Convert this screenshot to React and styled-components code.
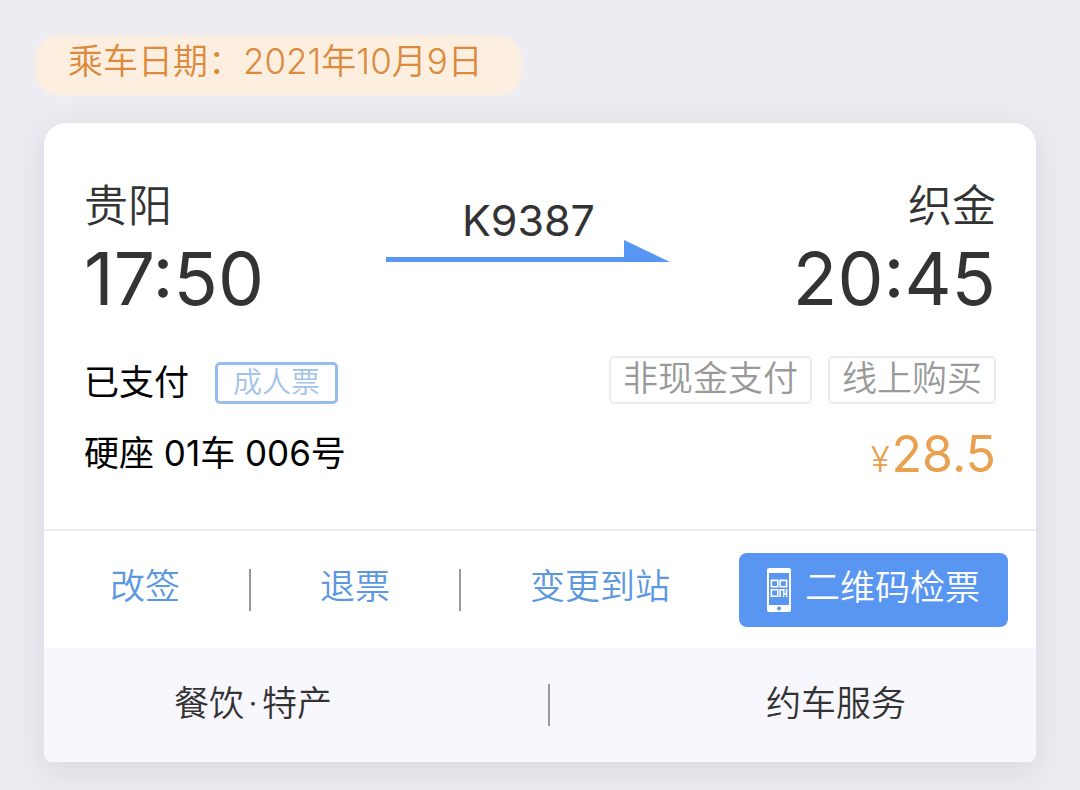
import React from "react";
import styled, { createGlobalStyle } from "styled-components";

const ticket = {
  date: "2021年10月9日",
  train: "K9387",
  from: { city: "贵阳", time: "17:50" },
  to: { city: "织金", time: "20:45" },
  status: "已支付",
  type: "成人票",
  tags: ["非现金支付", "线上购买"],
  seat: "硬座 01车 006号",
  price: "28.5",
};

function PhoneIcon() {
  return (
    <svg width="24" height="44" viewBox="0 0 24 44" aria-hidden="true">
      <path
        fill="#fff"
        fillRule="evenodd"
        d="M2 0h20a2 2 0 0 1 2 2v40a2 2 0 0 1-2 2H2a2 2 0 0 1-2-2V2a2 2 0 0 1 2-2zM2 5v32h20V5zM12 38.5a2 2 0 1 0 0 4a2 2 0 0 0 0-4z"
      />
      <g fill="none" stroke="#fff" strokeWidth="1.6">
        <path d="M4.4 12.4h6.4v6.4H4.4zM13.2 12.4h6.4v6.4h-6.4zM4.4 21.8h6.4v6.4H4.4z" />
        <path d="M13.2 29v-7.2h3.6v4.4h2.8v-5.2M19.6 27.2V29M16.4 29v-1.6" />
      </g>
    </svg>
  );
}

function App() {
  return (
    <StPage>
      <GlobalStyle />
      <StDate>乘车日期：{ticket.date}</StDate>

      <StCard>
        <StBody>
          <StRoute>
            <StStation>
              <StCity>{ticket.from.city}</StCity>
              <StTime>{ticket.from.time}</StTime>
            </StStation>
            <StTrain>
              <span>{ticket.train}</span>
              <svg width="284" height="22" viewBox="0 0 284 22" aria-hidden="true">
                <path fill="#5896f3" d="M0 17h238V0l46 22H0z" />
              </svg>
            </StTrain>
            <StStation $end>
              <StCity>{ticket.to.city}</StCity>
              <StTime>{ticket.to.time}</StTime>
            </StStation>
          </StRoute>

          <StInfo>
            <StStatus>
              <StText>{ticket.status}</StText>
              <StTypeTag>{ticket.type}</StTypeTag>
            </StStatus>
            <StTags>
              {ticket.tags.map((tag) => (
                <StTag key={tag}>{tag}</StTag>
              ))}
            </StTags>
          </StInfo>

          <StInfo>
            <StText>{ticket.seat}</StText>
            <StPrice>
              <small>¥</small>
              {ticket.price}
            </StPrice>
          </StInfo>
        </StBody>

        <StActions>
          <StLinkButton type="button">改签</StLinkButton>
          <StBar />
          <StLinkButton type="button">退票</StLinkButton>
          <StBar />
          <StLinkButton type="button">变更到站</StLinkButton>
          <StQrButton type="button">
            <PhoneIcon />
            <span>二维码检票</span>
          </StQrButton>
        </StActions>

        <StServices>
          <StServiceButton type="button">
            餐饮<StDot>·</StDot>特产
          </StServiceButton>
          <StBar />
          <StServiceButton type="button">约车服务</StServiceButton>
        </StServices>
      </StCard>
    </StPage>
  );
}

export default App;

const GlobalStyle = createGlobalStyle`
  * {
    box-sizing: border-box;
  }

  body {
    margin: 0;
    background-color: #edecf2;
    font-family: Inter, "Noto Sans CJK SC", sans-serif;
    font-weight: 350;
  }

  button {
    padding: 0;
    border: none;
    background: none;
    font: inherit;
    white-space: nowrap;
    cursor: pointer;
  }
`;

const StPage = styled.main`
  display: flex;
  flex-direction: column;
  align-items: flex-start;
  gap: 28px;
  padding: 36px 44px 28px 36px;
`;

const StDate = styled.div`
  padding: 0 38px 8px 32px;
  border-radius: 24px;
  background-color: #fcefdf;
  box-shadow: 0 0 4px #fcefdf;
  color: #dc8a3e;
  font-size: 35px;
  line-height: 51px;
`;

const StCard = styled.section`
  align-self: stretch;
  margin-left: 8px;
  border-radius: 22px 22px 8px 8px;
  background-color: #fff;
  box-shadow: 0 8px 32px rgba(60, 60, 80, 0.12);
  overflow: hidden;
`;

const StBody = styled.div`
  padding: 53px 40px 38px;
  border-bottom: 2px solid #ececee;
`;

const StRoute = styled.div`
  display: flex;
  justify-content: space-between;
  margin-bottom: 21px;
  color: #333;
`;

const StStation = styled.div`
  text-align: ${(props) => (props.$end ? "right" : "left")};
`;

const StCity = styled.div`
  font-size: 44px;
  line-height: 60px;
`;

const StTime = styled.div`
  font-size: 73px;
  font-weight: 400;
  line-height: 86px;
`;

const StTrain = styled.div`
  display: flex;
  flex-direction: column;
  align-items: center;
  padding-top: 24px;
  font-size: 43px;
  font-weight: 400;
  line-height: 40px;
`;

const StInfo = styled.div`
  display: flex;
  justify-content: space-between;
  align-items: center;
  height: 74px;
  color: #000;
  font-size: 35px;
`;

const StText = styled.span`
  padding-bottom: 8px;
  font-weight: 400;
`;

const StStatus = styled.div`
  display: flex;
  align-items: center;
  gap: 26px;
  padding-top: 6px;
`;

const StTypeTag = styled.span`
  padding: 0 15px;
  border: 3px solid #97bdee;
  border-radius: 5px;
  color: #a4c3ea;
  font-size: 29px;
  line-height: 36px;
`;

const StTags = styled.div`
  display: flex;
  gap: 16px;
`;

const StTag = styled.span`
  padding: 0 12px 4px;
  border: 2px solid #ececec;
  border-radius: 5px;
  color: #999;
  font-size: 35px;
  line-height: 40px;
`;

const StPrice = styled.strong`
  color: #e9a04f;
  font-size: 50px;
  font-weight: 400;

  small {
    margin-right: 2px;
    font-size: 35px;
    font-weight: 300;
  }
`;

const StActions = styled.div`
  display: flex;
  justify-content: space-between;
  align-items: center;
  height: 117px;
  padding: 0 28px 0 66px;
`;

const StLinkButton = styled.button`
  && {
    padding-bottom: 12px;
    color: #5c98df;
    font-size: 35px;
  }
`;

const StBar = styled.span`
  width: 2px;
  height: 42px;
  background-color: #999;
`;

const StQrButton = styled.button`
  display: flex;
  align-items: center;
  gap: 14px;
  height: 74px;

  && {
    padding: 0 28px;
    border-radius: 8px;
    background-color: #5896f1;
    color: #fff;
    font-size: 35px;
  }

  span {
    padding-bottom: 10px;
  }
`;

const StServices = styled.div`
  display: flex;
  justify-content: space-between;
  align-items: center;
  height: 114px;
  padding: 0 130px;
  background-color: #f8f7fd;
`;

const StServiceButton = styled.button`
  && {
    padding-bottom: 10px;
    color: #333;
    font-size: 35px;
  }
`;

const StDot = styled.span`
  margin: 0 4px;
`;
